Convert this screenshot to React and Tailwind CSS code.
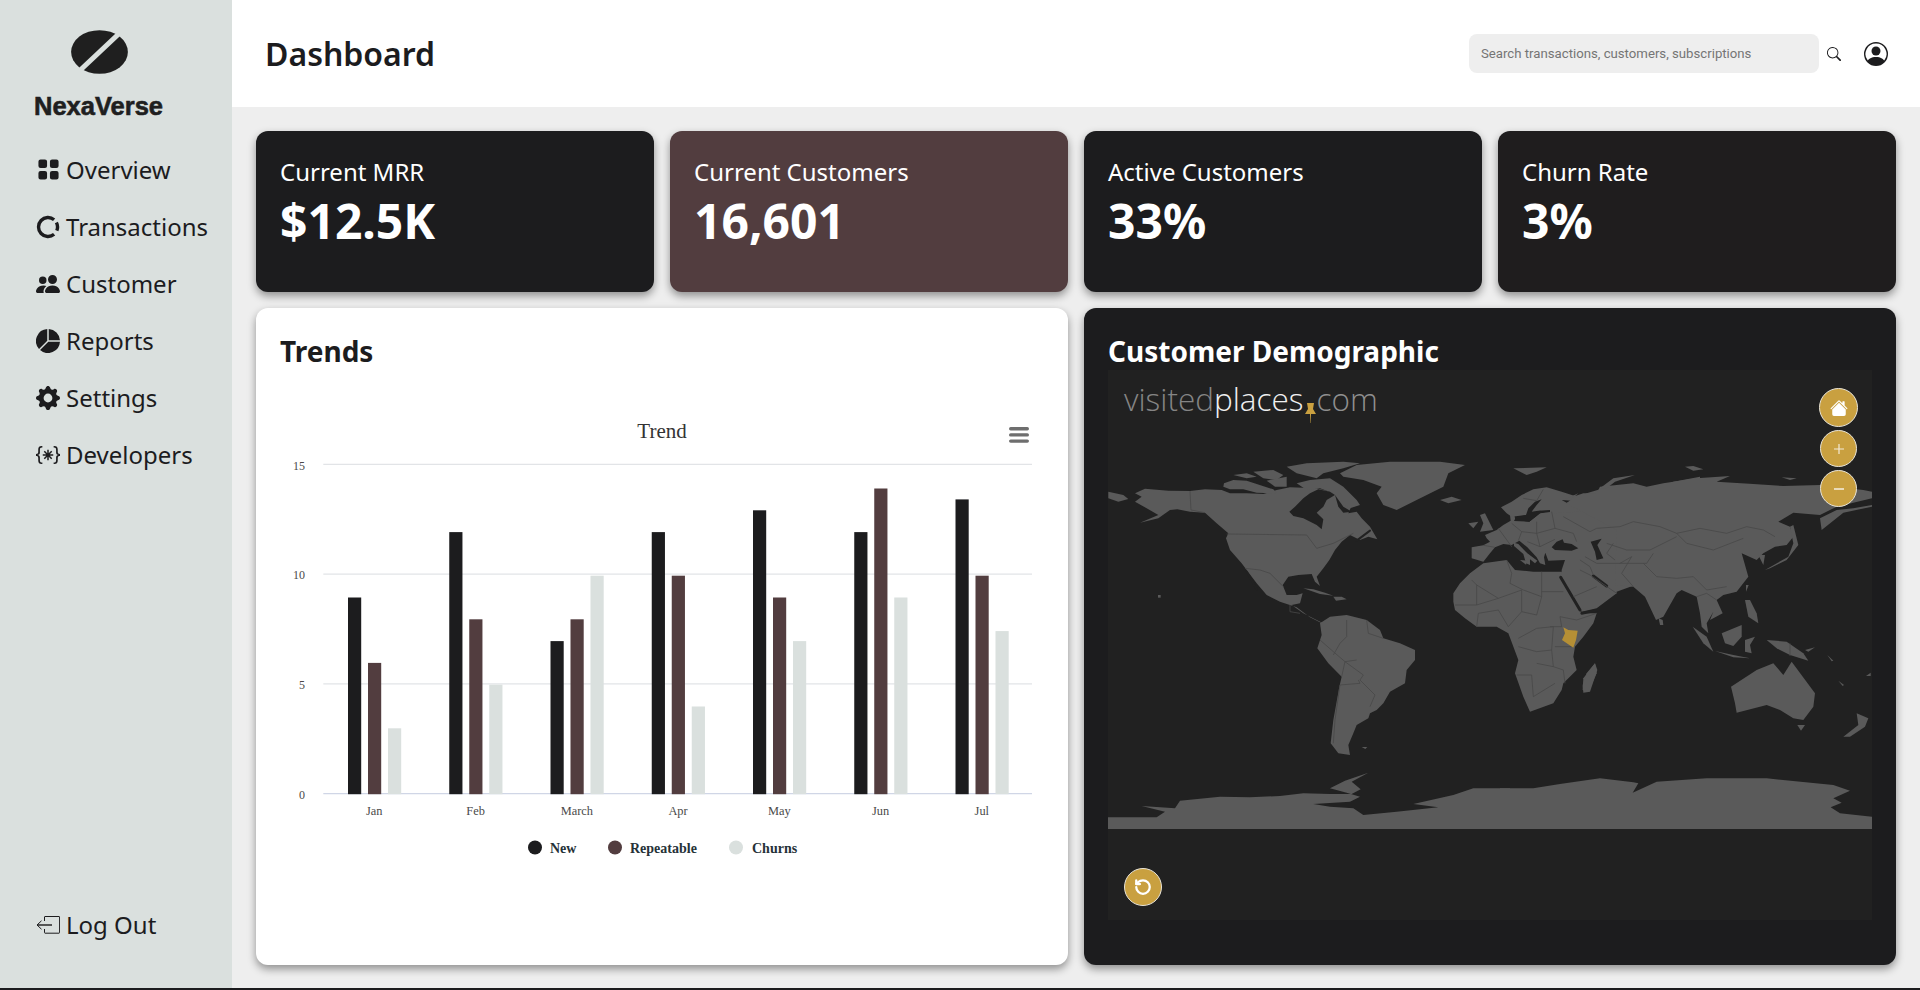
import React from "react";
import { BsGridFill, BsPeopleFill, BsPieChartFill, BsGearFill, BsBracesAsterisk, BsSearch, BsPersonCircle, BsHouseFill } from "react-icons/bs";
import { RotateCcw } from "lucide-react";

const Z3 = "translate(-18,-40) scale(0.33333)";
const Z4 = "translate(392,-40) scale(0.33333)";
const Z5 = "translate(-18,250) scale(0.33333)";
const Z6 = "translate(392,250) scale(0.33333)";
const Z10 = "translate(332,100) scale(0.33333)";
const Z12 = "translate(632,220) scale(0.33333)";

const LAND = [
  [Z3, "55,485 100,495 115,507 85,515 55,505"],
  [Z3, "135,490 165,476 235,482 300,483 345,478 395,480 420,490 470,490 520,492 560,480 600,472 680,475 740,490 790,515 775,550 800,545 815,565 840,590 862,628 835,620 810,630 780,615 755,635 735,660 718,690 700,715 680,740 690,768 675,755 665,732 625,735 595,740 578,765 590,795 620,795 638,790 630,820 605,825 640,850 680,870 710,885 730,875 725,895 700,882 660,862 620,832 570,815 530,795 500,760 470,720 455,700 420,660 408,625 415,610 380,580 345,548 300,545 262,538 240,540 205,565 150,578 205,555 170,535 135,515 155,500"],
  [Z3, "402,460 430,450 470,452 500,462 550,478 560,490 500,488 460,478 420,478 400,470"],
  [Z3, "430,435 470,430 500,440 470,445"],
  [Z3, "490,425 550,420 580,435 560,450 520,445"],
  [Z3, "530,452 590,440 590,470 555,470"],
  [Z3, "590,410 650,400 760,395 810,400 760,415 700,430 680,445 620,430"],
  [Z3, "620,460 660,450 720,445 760,470 800,510 810,525 780,535 750,520 730,490 690,475 650,480"],
  [Z3, "750,430 800,405 900,395 1050,395 1125,405 1075,430 1060,470 980,510 920,540 880,525 860,490 875,470 820,450 760,440"],
  [Z3, "1050,510 1085,500 1115,510 1075,520"],
  [Z3, "640,775 670,778 705,788 730,797 690,792"],
  [Z3, "730,800 755,800 770,808 738,812"],
  [Z3, "204,795 212,795 212,803 204,803"],
  [Z5, "720,-10 770,-15 830,0 870,30 880,55 930,70 975,90 975,120 950,150 945,190 900,215 880,250 860,270 840,280 835,295 800,315 790,340 775,375 780,405 745,400 722,370 730,300 748,200 755,170 715,130 682,85 695,45 690,10"],
  [Z5, "815,381 832,381 826,387"],
  [Z5, "54,627 54,592 200,592 225,575 155,558 255,565 270,542 390,530 480,532 570,528 640,520 720,522 785,522 812,508 785,485 835,458 765,482 720,505 770,518 810,530 780,545 670,552 720,560 790,565 820,585 920,575 1045,562 970,552 1090,525 1150,505 1260,505 1260,627"],
  [Z6, "0,505 100,505 180,492 300,475 400,487 415,490 398,518 470,485 620,475 800,475 1000,495 1050,512 1000,535 1025,548 992,562 1020,580 1116,590 1116,627 0,627"],
  [Z10, "40,370 60,340 90,310 130,280 200,270 225,300 280,305 340,305 365,305 385,350 400,385 425,430 470,430 460,460 430,500 405,530 400,560 410,600 370,640 365,660 340,700 270,725 250,680 225,610 235,570 205,490 170,470 110,470 75,445 45,420 40,395"],
  [Z10, "465,580 470,610 445,665 428,660 430,625"],
  [Z10, "95,232 130,226 150,215 140,205 135,195 170,180 190,165 212,152 210,135 222,130 226,150 268,155 300,130 340,120 500,50 570,45 600,70 625,65 700,35 780,20 780,300 600,340 530,365 530,370 510,385 470,415 425,425 400,380 365,320 365,300 375,270 325,272 316,248 312,262 316,285 300,280 290,262 262,232 238,212 215,225 190,222 165,232 150,250 130,275 95,265"],
  [Z10, "200,130 183,112 215,95 245,75 280,58 320,52 365,65 412,80 395,92 365,90 380,98 440,70 480,58 500,50 500,120 340,130 300,122 260,135 215,140"],
  [Z10, "120,135 135,130 160,180 120,185 130,160"],
  [Z10, "85,160 115,155 100,175"],
  [Z10, "222,218 235,222 262,250 292,272 285,280 270,268 270,285 258,280 250,252 222,228"],
  [Z10, "240,270 262,272 258,284"],
  [Z4, "235,490 190,510 250,490 290,490 300,470 400,460 440,470 490,460 590,445 690,438 650,455 760,462 850,468 960,465 1090,480 1116,485 1116,505 1010,530 960,555 880,548 835,575 870,590 880,620 860,645 825,650 790,670 770,690 725,670 745,740 710,785 670,795 650,810 668,850 630,870 640,845 620,880 625,910 605,890 600,850 590,800 545,780 530,790 490,860 468,870 435,800 400,770 345,765 350,600 200,520"],
  [Z4, "960,565 1010,540 1060,535 1116,525 1116,530 1030,548 965,600"],
  [Z4, "795,720 865,680 880,640 870,590 880,585 895,645 860,690 810,715"],
  [Z4, "775,675 795,675 790,705"],
  [Z4, "735,810 750,810 770,850 775,880 745,860"],
  [Z4, "738,765 746,765 738,785"],
  [Z4, "40,415 140,412 110,425 80,435"],
  [Z4, "300,475 340,445 405,435 345,455 320,475"],
  [Z4, "555,410 580,408 610,418 580,422"],
  [Z4, "845,442 890,445 870,450"],
  [Z4, "476,865 488,870 490,885 480,885"],
  [Z6, "578,20 620,50 640,95 610,70"],
  [Z6, "645,93 700,105 750,115 700,112"],
  [Z6, "665,40 725,15 725,50 700,78 675,70"],
  [Z6, "735,60 765,50 750,75 755,100 735,95"],
  [Z6, "800,60 860,65 910,100 925,122 870,105 830,85"],
  [Z6, "915,90 945,82 925,95"],
  [Z6, "693,200 770,150 820,130 850,165 875,125 945,220 940,260 910,300 880,295 840,270 800,255 710,278 705,250"],
  [Z6, "892,315 915,315 903,332"],
  [Z6, "1030,350 1075,315 1070,280 1105,295 1095,320 1050,350"],
  [Z6, "248,195 260,160 285,130 292,150 270,215 250,218"],
  [Z12, "295,272 312,285 308,288"],
  [Z12, "378,258 392,248 392,258"],
  [Z12, "262,195 280,212 275,214"],
];

const WATER = [
  [Z3, "598,545 615,530 640,505 660,490 685,478 720,485 735,495 710,510 700,530 680,548 700,568 695,598 680,585 640,565 610,558"],
  [Z3, "735,495 760,530 785,545 760,548 745,530"],
  [Z10, "335,232 350,215 368,208 372,218 395,222 415,235 395,242 345,240"],
  [Z10, "452,215 485,206 472,225 490,265 470,270 465,245"],
  [Z10, "305,88 285,95 265,115 258,135 228,142 222,153 268,155 300,130 330,126 330,120 295,122 275,125 290,105"],
];
const WATER_LINES = [
  [Z3, "470,725 500,778", 6],
  [Z10, "362,322 420,420", 9],
  [Z10, "460,318 500,348", 9],
  [Z10, "425,430 475,420", 8],
  [Z3, "800,632 840,602", 6],
];

const BORDERS = [
  [Z3, "300,483 303,540 345,548"],
  [Z3, "410,612 650,615 680,655 730,640 790,610"],
  [Z3, "465,715 510,720 540,730 580,770"],
  [Z3, "600,825 600,845 630,850"],
  [Z5, "755,170 765,125 820,165 810,180 855,225 840,260"],
  [Z5, "730,105 750,70 770,50 770,0"],
  [Z5, "800,120 765,125"],
  [Z5, "750,195 810,190 805,180"],
  [Z5, "750,195 735,300 730,370"],
  [Z5, "690,60 730,95 765,125"],
  [Z5, "830,0 835,40 880,55"],
  [Z10, "200,270 215,310 210,340 250,360 305,380 305,305"],
  [Z10, "305,365 370,365"],
  [Z10, "95,330 110,345 175,385 245,360"],
  [Z10, "110,345 110,405 45,405"],
  [Z10, "110,405 175,385"],
  [Z10, "245,360 245,425 205,470"],
  [Z10, "290,435 305,380"],
  [Z10, "290,435 245,425"],
  [Z10, "330,470 365,470 360,440 410,450 470,430"],
  [Z10, "235,505 290,475 340,470 335,540 290,545 235,530"],
  [Z10, "345,530 400,530"],
  [Z10, "230,615 275,615 280,680 345,640"],
  [Z10, "340,590 370,600 375,640"],
  [Z10, "290,580 340,590 335,540"],
  [Z10, "110,470 115,430 175,420 205,470"],
  [Z10, "175,175 215,230"],
  [Z10, "130,226 165,232"],
  [Z10, "215,160 245,185 290,190 290,155"],
  [Z10, "245,185 235,212"],
  [Z10, "290,190 345,175 400,190 410,215"],
  [Z10, "290,190 300,230 345,208"],
  [Z10, "262,215 300,230"],
  [Z10, "335,125 345,175"],
  [Z10, "420,300 450,315 530,370"],
  [Z10, "400,380 470,350"],
  [Z10, "420,270 450,290 460,315"],
  [Z10, "290,92 310,58"],
  [Z10, "250,85 290,92"],
  [Z4, "190,560 270,605 290,595 360,590 400,575 480,590 530,610 600,595 680,610 740,590 790,600 825,620"],
  [Z4, "530,610 560,640 640,660 730,625"],
  [Z4, "320,640 380,660 450,660 530,620"],
  [Z4, "255,680 290,700 360,700 395,680"],
  [Z4, "360,700 440,700 460,670"],
  [Z4, "430,700 470,740 530,745 580,740"],
  [Z4, "580,740 620,780 680,770"],
  [Z4, "395,680 365,730 400,770"],
  [Z4, "340,640 320,670 345,690"],
  [Z4, "590,800 620,790 650,810"],
  [Z6, "870,70 870,108"],
];

function WorldMap() {
  return (
    <svg viewBox="0 0 764 550" className="block w-full h-full">
      {LAND.map(([t, p], i) => <polygon key={i} transform={t} points={p} fill="#5a5a5a" />)}
      {WATER.map(([t, p], i) => <polygon key={i} transform={t} points={p} fill="#212121" />)}
      {WATER_LINES.map(([t, p, w], i) => <polyline key={i} transform={t} points={p} fill="none" stroke="#212121" strokeWidth={w} strokeLinecap="round" />)}
      {BORDERS.map(([t, p], i) => <polyline key={i} transform={t} points={p} fill="none" stroke="#484848" strokeWidth="2.4" strokeLinejoin="round" />)}
      <polygon transform={Z10} points="370,472 385,480 413,482 408,510 400,533 366,510 375,490" fill="#b58f35" />
    </svg>
  );
}

const MONTHS = [
  ["Jan", 9, 6, 3],
  ["Feb", 12, 8, 5],
  ["March", 7, 8, 10],
  ["Apr", 12, 10, 4],
  ["May", 13, 9, 7],
  ["Jun", 12, 14, 9],
  ["Jul", 13.5, 10, 7.46],
];
const SERIES = ["#1c1c1e", "#523d3f", "#dae0de"];
const Y0 = 793.7;
const UNIT = 21.96;
const BAR = 21.8;

function TrendChart() {
  return (
    <svg viewBox="280 370 764 510" className="block w-[764px] h-[510px]" fontFamily="'Liberation Serif', serif">
      <text x="662" y="438" textAnchor="middle" fontSize="21" fill="#333333">Trend</text>
      <g fill="#6e6e6e">
        <rect x="1009" y="427" width="20" height="3.4" rx="1.7" />
        <rect x="1009" y="433.2" width="20" height="3.4" rx="1.7" />
        <rect x="1009" y="439.4" width="20" height="3.4" rx="1.7" />
      </g>
      {[15, 10, 5].map((v) => (
        <line key={v} x1="323.3" x2="1032" y1={Y0 - v * UNIT} y2={Y0 - v * UNIT} stroke="#e2e4e7" strokeWidth="1.2" />
      ))}
      <line x1="323.3" x2="1032" y1={Y0} y2={Y0} stroke="#d0d6e6" strokeWidth="1.2" />
      {[15, 10, 5, 0].map((v) => (
        <text key={v} x="305" y={Y0 - v * UNIT + 5.2} textAnchor="end" fontSize="12" fill="#4a4a4a">{v}</text>
      ))}
      {MONTHS.map(([m, a, b, c], i) => {
        const x0 = 348 + i * 101.25;
        return (
          <g key={m}>
            {[a, b, c].map((v, j) => (
              <rect key={j} x={x0 + j * 20} y={Y0 - v * BAR} width="13.2" height={v * BAR + 0.5} fill={SERIES[j]} />
            ))}
            <text x={x0 + 26.3} y="815" textAnchor="middle" fontSize="12.4" fill="#4a4a4a">{m}</text>
          </g>
        );
      })}
      <g fontSize="14" fontWeight="700" fill="#263238">
        <circle cx="535" cy="847.5" r="7" fill="#1c1c1e" />
        <text x="550" y="852.5">New</text>
        <circle cx="615" cy="847.5" r="7" fill="#523d3f" />
        <text x="630" y="852.5">Repeatable</text>
        <circle cx="736" cy="847.5" r="7" fill="#dae0de" />
        <text x="752" y="852.5">Churns</text>
      </g>
    </svg>
  );
}

function Logo() {
  return (
    <svg viewBox="0 0 57 44" className="w-[57px] h-[44px]">
      <ellipse cx="28.5" cy="22" rx="28.4" ry="21.8" fill="#1f1f1f" />
      <line x1="3" y1="46" x2="53" y2="-1" stroke="#dae0de" strokeWidth="5" />
    </svg>
  );
}

function RingIcon() {
  return (
    <svg viewBox="0 0 24 24" className="w-6 h-6" fill="none" stroke="#1c1c1e" strokeWidth="3.4">
      <path d="M18.1 4.7 A9.5 9.5 0 1 0 18.1 19.3" />
      <path d="M20.4 7.5 A9.5 9.5 0 0 1 20.8 15.6" />
    </svg>
  );
}

function LogoutIcon() {
  return (
    <svg viewBox="0 0 24 24" className="w-6 h-6" fill="none" stroke="#1c1c1e">
      <path d="M8.5 8 V4 Q8.5 3.5 9 3.5 H23 Q23.6 3.5 23.6 4 V19.5 Q23.6 20.2 23 20.2 H9 Q8.5 20.2 8.5 19.5 V16" strokeWidth="1" />
      <path d="M2 12 H16" strokeWidth="1.6" stroke="#333" />
      <path d="M5.5 7.8 L1 12 L5.5 16.2" strokeWidth="1" />
    </svg>
  );
}

const NAV = [
  ["Overview", <BsGridFill size={23} />],
  ["Transactions", <RingIcon />],
  ["Customer", <BsPeopleFill size={24} />],
  ["Reports", <BsPieChartFill size={24} />],
  ["Settings", <BsGearFill size={24} />],
  ["Developers", <BsBracesAsterisk size={24} />],
];

function NavItem({ icon, label }) {
  return (
    <div className="flex items-center h-[57px] gap-[6px] pl-[36px] text-[24px] text-[#1c1c1e]">
      <span className="w-6 h-6 flex items-center justify-center text-[#1c1c1e]">{icon}</span>
      <span>{label}</span>
    </div>
  );
}

function Stat({ label, value, bg }) {
  return (
    <div className={`h-[161px] rounded-xl px-6 pt-[24px] text-white shadow-[0_4px_8px_rgba(0,0,0,0.4)] ${bg}`}>
      <div className="text-[24px] leading-[33px]">{label}</div>
      <div className="text-[48px] font-bold leading-[65px]">{value}</div>
    </div>
  );
}

function GoldBtn({ children, size }) {
  return (
    <div className={`rounded-full bg-[#c9a040] border-[1.5px] border-[#e8e4d8] flex items-center justify-center text-white ${size}`}>
      {children}
    </div>
  );
}

export default function App() {
  return (
    <div className="flex h-[990px] w-[1920px] overflow-hidden border-b-2 border-[#1c1c1e] bg-[#eeeeee] font-['Noto_Sans',sans-serif]">
      <aside className="w-[232px] shrink-0 bg-[#dae0de] flex flex-col">
        <div className="h-[141px] pt-[30px] flex flex-col">
          <div className="pl-[71px]"><Logo /></div>
          <div className="pl-[34px] mt-[17px] text-[25.5px] leading-[30px] font-bold font-['Liberation_Sans',sans-serif] text-[#1f1f1f] [-webkit-text-stroke:0.6px_#1f1f1f]">NexaVerse</div>
        </div>
        <nav>
          {NAV.map(([l, i]) => <NavItem key={l} label={l} icon={i} />)}
        </nav>
        <div className="mt-auto mb-[35px]">
          <NavItem label="Log Out" icon={<LogoutIcon />} />
        </div>
      </aside>
      <main className="flex-1 flex flex-col min-w-0">
        <header className="h-[107px] bg-white flex items-center pl-[33px] pr-[32px]">
          <h1 className="text-[32px] font-semibold text-[#1c1c1e] leading-none">Dashboard</h1>
          <input
            readOnly
            placeholder="Search transactions, customers, subscriptions"
            className="ml-auto w-[350px] h-[39px] rounded-lg bg-[#eeeeee] px-3 text-[13.2px] outline-none placeholder:text-[#757575] font-['Roboto',sans-serif]"
          />
          <BsSearch size={14} className="ml-2 text-[#1c1c1e]" />
          <BsPersonCircle size={24} className="ml-[23px] text-[#1c1c1e]" />
        </header>
        <div className="flex-1 px-6 pt-6 grid grid-cols-4 gap-4 content-start">
          <Stat label="Current MRR" value="$12.5K" bg="bg-[#1c1c1e]" />
          <Stat label="Current Customers" value="16,601" bg="bg-[#523d3f]" />
          <Stat label="Active Customers" value="33%" bg="bg-[#1c1c1e]" />
          <Stat label="Churn Rate" value="3%" bg="bg-[#1f1d1e]" />
          <section className="col-span-2 h-[657px] rounded-xl bg-white px-6 pt-6 shadow-[0_4px_8px_rgba(0,0,0,0.4)]">
            <h2 className="text-[28px] font-bold leading-[38px] text-[#1c1c1e]">Trends</h2>
            <TrendChart />
          </section>
          <section className="col-span-2 h-[657px] rounded-xl bg-[#1c1c1e] px-6 pt-6 shadow-[0_4px_8px_rgba(0,0,0,0.4)]">
            <h2 className="text-[28px] font-bold leading-[38px] text-white">Customer Demographic</h2>
            <div className="relative h-[550px] bg-[#212121] overflow-hidden">
              <WorldMap />
              <div className="absolute left-[16px] top-[7px] flex items-start text-[31.5px] leading-[44px] font-light font-['Open_Sans',sans-serif]">
                <span className="text-[#858585]">visited</span>
                <span className="text-[#f0f0f0]">places</span>
                <svg viewBox="0 0 11 20" className="w-[11px] h-[20px] mx-[1px] mt-[26px]">
                  <path d="M2 0 H9 L8 6 L11 11 H6 L5.7 20 H5.3 L5 11 H0 L3 6Z" fill="#c9a040" />
                </svg>
                <span className="text-[#8f8f8f]">com</span>
              </div>
              <div className="absolute right-[14px] top-[18px] flex flex-col items-center gap-[3px]">
                <GoldBtn size="w-[39px] h-[39px]"><BsHouseFill size={18} /></GoldBtn>
                <GoldBtn size="w-[37px] h-[37px]"><svg viewBox="0 0 10 10" className="w-[10px] h-[10px]"><path d="M5 0V10M0 5H10" stroke="#f3ead6" strokeWidth="1.2" /></svg></GoldBtn>
                <GoldBtn size="w-[37px] h-[37px]"><svg viewBox="0 0 10 10" className="w-[10px] h-[10px]"><path d="M0 5H10" stroke="#f3ead6" strokeWidth="1.6" /></svg></GoldBtn>
              </div>
              <div className="absolute left-[16px] bottom-[14px]">
                <GoldBtn size="w-[38px] h-[38px]"><RotateCcw size={18} strokeWidth={3} /></GoldBtn>
              </div>
            </div>
          </section>
        </div>
      </main>
    </div>
  );
}
